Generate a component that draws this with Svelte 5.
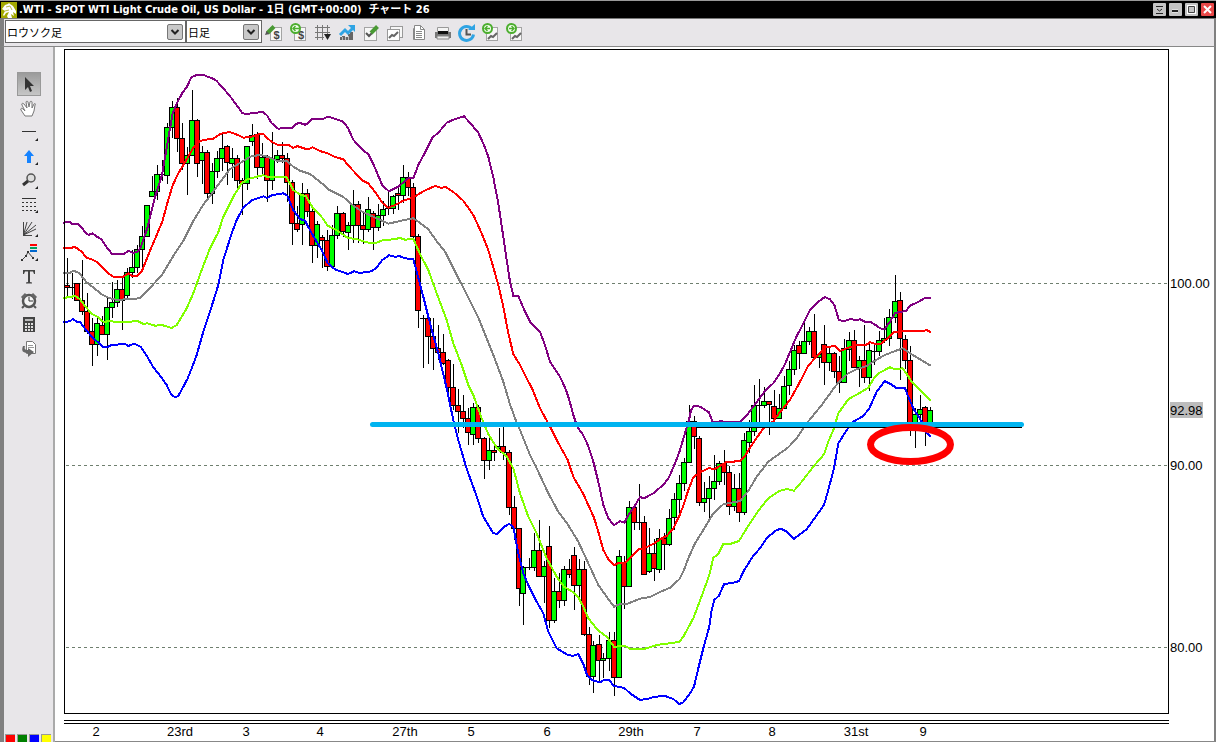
<script>
  const green = '#00ff00';
  const red = '#ff0000';

  // Candle runs: origin of the run, then "x high bodyTop bodyBottom low colour" in thirds of a chart unit.
  const runs = [
    [60, 60, `22 595 677 682 712 r;37 640 682 685 717 k;52 670 670 722 722 r;67 600 721 754 765 r;82 700 754 814 822 r;97 775 814 853 920 r;112 775 790 853 890 g;127 770 797 823 825 r;142 715 742 823 900 g;157 667 727 742 775 g;172 660 688 727 742 g;187 650 688 722 812 r;202 625 637 706 722 g;217 570 622 638 655 g;232 555 568 622 640 g;247 500 529 568 625 g;262 436 436 529 529 g;277 350 394 409 409 g;292 315 343 394 420 g;307 300 343 346 365 k;322 190 202 346 372 g;337 125 142 202 235 g;352 115 142 235 277 r;367 190 235 310 332 r;382 263 286 310 407 g;397 92 181 286 290 g;412 177 181 310 353 r;428 260 278 301 373 g;443 270 277 401 425 r;458 310 334 401 433 g;473 275 295 334 355 g;488 222 265 295 335 g;503 255 259 307 377 r;518 265 295 310 355 g;533 287 295 361 392 r;548 355 361 370 465 r;563 259 259 370 392 g;578 193 226 244 260 g;593 217 223 322 358 r;608 250 292 322 350 g;623 285 292 361 427 r;638 217 295 361 392 g;653 272 286 297 310 g;668 247 286 295 310 r;683 280 295 367 427 r;698 360 367 490 555 r;713 440 490 508 518 r`],
    [280, 100, `68 250 280 373 437 g;83 268 280 334 352 r;98 328 334 437 490 r;113 365 373 437 475 g;128 407 412 421 505 r;143 392 421 499 515 r;158 375 406 499 502 g;173 320 340 406 418 g;189 337 340 394 412 r;204 367 376 398 452 g;219 272 313 376 430 g;234 303 313 376 430 r;249 335 376 388 433 r;264 293 328 388 397 g;279 335 340 382 452 r;294 313 346 382 395 g;309 305 328 346 378 g;324 275 325 328 345 k;339 287 289 325 343 g;354 265 280 286 332 r;369 197 232 286 310 g;384 218 232 262 290 r;399 250 262 409 415 r;414 402 409 631 686 r;430 645 655 657 805 k;445 650 655 709 792 r;460 655 709 745 812 r;475 675 745 757 780 r;490 702 757 790 795 r;505 778 781 862 880 r;520 793 862 916 930 r;535 868 916 934 1000 r;550 885 934 955 985 r;565 925 955 997 1035 r;580 910 922 1003 1037 g;595 915 922 1015 1030 r`],
    [440, 390, `132 142 145 211 267 r;147 145 181 211 240 g;162 160 181 187 215 r;177 115 169 175 180 g;191 110 169 187 212 r;207 180 187 352 377 r;222 320 352 415 452 r;237 415 415 595 650 r;251 530 532 610 707 g;267 505 532 535 540 k;282 430 481 532 545 g;297 390 481 559 562 r;312 515 529 559 640 g;327 410 469 691 715 r;342 565 604 691 700 g;357 550 604 631 655 r;372 528 538 631 650 g;387 508 538 553 565 r;402 472 496 586 662 r;417 508 538 586 622 g;432 515 538 733 740 r;447 712 733 859 887 r;461 755 766 859 910 g;477 735 763 811 880 r;491 790 805 811 865 g;507 727 751 805 845 g;522 727 751 862 920 r;537 482 499 862 865 g;552 500 517 589 658 r;568 333 352 589 590 g;583 350 352 397 420 r;598 283 397 399 420 k;613 380 397 553 555 r;628 415 490 544 550 g;643 448 490 535 575 r;658 418 445 538 550 g;673 430 445 463 540 r;688 358 385 463 470 g;703 310 328 382 422 g`],
    [620, 390, `178 255 280 328 370 g;193 205 217 280 305 g;208 47 95 217 220 g;223 80 95 139 177 r;238 138 145 337 350 r;253 277 325 337 368 g;268 258 295 325 390 g;283 197 274 295 332 g;298 215 220 274 285 g;313 180 220 247 285 r;328 230 247 349 375 r;343 253 295 349 365 g;358 250 295 367 397 r;373 130 151 367 375 g;388 90 124 157 190 g`],
    [740, 265, `43 360 421 499 515 g;59 343 421 423 490 k;74 367 409 421 430 g;89 408 409 418 510 r;104 375 424 460 490 r;119 387 430 460 462 g;134 333 364 430 430 g;149 290 313 361 390 g;164 240 256 313 330 g;179 230 241 265 313 r;194 175 229 265 268 g;209 188 199 229 240 g;224 147 199 277 280 r;239 265 268 277 310 g;254 180 238 292 362 r;269 250 265 292 320 g;284 262 265 319 340 r;299 275 319 352 386 r;314 222 250 352 355 g;329 203 226 253 290 g;344 197 226 307 310 r;359 275 286 307 368 g;374 180 286 337 355 r;389 235 256 337 380 g;404 240 258 260 300 k;419 200 226 259 275 g;434 160 220 226 235 g;449 133 157 220 245 g;466 30 109 157 175 g;481 82 106 220 345 r;496 210 223 286 313 r;511 245 286 480 515 r;526 430 448 480 550 g;541 390 433 448 465 g;556 425 427 480 545 r;571 427 436 480 480 g`]
  ];

  const candles = runs.flatMap(([ox, oy, text]) =>
    text.split(';').map((row) => {
      const p = row.split(' ');
      const y = (v) => oy + Math.floor(Number(v) / 3);
      return { x: ox + Math.floor(Number(p[0]) / 3), high: y(p[1]), top: y(p[2]), bottom: y(p[3]), low: y(p[4]), kind: p[5] };
    })
  );

  // Band lines: each part has its own origin and is stored in thirds of a chart unit.
  const bands = [
    { name: 'upper2', color: '#800080', parts: [
      [60, 60, '10 488,28 485,34 491,52 491,64 501,80 523,88 524,97 520,108 528,125 539,140 562,157 583,178 581,193 581,205 572,217 578,232 577,242 562,262 505,285 412,306 345,325 235,338 160,352 127,367 99,380 82,394 52,410 45,430 44,445 51,457 55,470 63,485 80,500 97,515 115,530 136,547 159,562 163,578 158,610 157,622 167,635 190,655 206,685 203,698 203,710 191'],
      [280, 100, '60 69,75 74,82 72,95 58,115 56,128 58,143 50,158 54,188 64,204 84,220 119,250 152,264 161,280 192,307 256,327 274,355 260,385 235,400 235,415 195,430 167,457 113,475 98,500 68,520 59,552 49,567 65,595 98,612 135,625 170,640 232,655 310,665 378,680 480,690 545,700 587,715 588,735 635,750 665,780 695,795 735,810 785,840 830'],
      [440, 390, '378 0,388 30,400 75,412 110,430 136,445 168,460 215,475 275,490 345,505 385,522 406,540 393,553 398,567 372,583 350,600 321,612 325,640 310,655 297,672 283,688 260,703 225'],
      [620, 390, '178 187,193 137,207 90,213 60,223 47,240 50,267 67,277 94,290 97,300 93,320 97,360 96,385 70,405 43'],
      [740, 265, '77 375,100 355,120 325,134 299,149 263,167 220,190 175,210 135,232 112,255 96,270 103,283 120,297 166,315 168,332 161,345 166,360 163,375 170,390 170,408 181,420 190,434 192,450 170,465 145,480 140,497 139,510 122,530 113,555 99,572 99']
    ] },
    { name: 'upper1', color: '#ff0000', parts: [
      [60, 60, '10 564,35 564,42 560,52 565,67 577,80 594,95 598,110 606,125 619,142 638,160 650,190 650,205 640,215 647,232 648,245 635,262 592,290 525,307 485,322 430,338 376,355 340,382 295,400 263,415 246,430 240,460 236,480 222,507 216,525 221,550 233,580 229,590 224,610 221,622 235,635 245,652 254,685 254,700 264,712 258'],
      [280, 100, '60 141,75 146,88 146,98 142,125 155,143 160,160 169,190 178,204 196,234 227,250 243,265 250,290 283,308 310,325 323,345 315,370 302,400 292,430 274,465 258,482 263,498 262,520 276,550 302,580 345,605 400,625 450,640 502,655 555,670 620,685 700,700 762,720 795'],
      [440, 390, '278 0,300 55,325 100,350 150,383 210,400 260,430 312,445 345,462 383,475 425,490 480,505 507,522 526,537 518,555 518,575 500,597 477,615 474,640 462,660 448,680 438,700 415'],
      [620, 390, '178 378,190 347,205 300,220 262,240 247,268 234,283 238,300 228,318 217,360 213,373 200,400 158,430 115,462 93'],
      [740, 265, '105 460,150 405,180 350,205 302,235 268,260 245,285 244,300 258,325 248,350 241,378 240,390 232,405 236,420 238,440 222,460 202,483 199,500 198,550 198,560 195,572 202']
    ] },
    { name: 'middle', color: '#808080', parts: [
      [60, 60, '10 638,30 638,40 632,58 639,78 665,97 680,125 703,145 713,170 720,240 715,262 692,292 660,307 643,345 580,370 543,400 483,430 434,447 412,480 367,510 327,550 303,575 288,605 285,630 293,650 302,680 302,700 320'],
      [280, 100, '60 212,90 222,128 252,143 267,190 291,220 317,250 337,280 350,325 371,360 363,400 355,430 376,445 388,470 424,495 455,520 505,550 563,595 652,620 715,640 765,670 845,690 913,705 955'],
      [440, 390, '240 120,270 195,290 235,325 310,355 365,383 403,415 455,445 520,475 585,505 627,522 650,540 642,560 642,600 626,630 621,660 606,690 593'],
      [620, 390, '178 568,190 545,205 505,225 460,250 420,280 370,310 343,360 333,385 303,410 260,445 215,480 190,505 172,530 145,560 100,605 45'],
      [740, 265, '285 365,300 348,325 325,350 313,380 303,400 290,430 272,460 260,488 250,515 268,545 286,572 302']
    ] },
    { name: 'lower1', color: '#80ff00', parts: [
      [60, 60, '10 713,30 712,45 707,60 718,78 742,97 763,112 770,130 785,150 784,190 787,232 783,250 792,262 790,285 797,305 795,335 804,350 795,365 770,380 745,400 700,425 630,450 565,475 517,490 470,520 410,545 370,562 358,590 350,610 346,625 352,670 350,680 352,700 390'],
      [280, 100, '60 283,78 289,98 323,113 338,128 355,143 377,170 391,204 414,230 417,260 427,285 430,308 421,350 417,358 413,375 419,400 417,420 462,445 510,470 580,500 660,520 730,545 795,565 855,580 885,605 955,625 1002,650 1043,680 1070'],
      [440, 390, '220 235,240 310,265 380,290 430,320 505,350 560,372 590,400 607,415 622,430 650,445 685,475 722,500 740,522 770,555 768,570 776,615 776,655 764,690 760'],
      [620, 390, '178 755,190 740,220 685,250 605,268 555,280 503,295 492,310 462,330 462,357 453,380 415,415 362,445 325,480 302,500 297,522 302,545 275,580 230,612 193,625 155'],
      [740, 265, '282 490,295 445,325 403,360 383,385 368,400 343,415 325,440 312,450 307,465 313,488 310,500 327,515 350,545 380,572 408']
    ] },
    { name: 'lower2', color: '#0000ff', parts: [
      [60, 60, '10 786,30 784,38 777,50 785,60 786,78 810,97 832,112 845,130 862,145 860,155 855,195 852,205 858,222 851,242 860,262 890,280 922,305 953,320 975,333 1003,345 1012,355 1008,370 980,382 958,395 925,410 885,430 815,450 755,475 675,490 600,515 520,530 480,550 443,575 421,610 409,622 414,635 406,670 400,682 407,700 450'],
      [280, 100, '60 357,75 362,95 400,125 450,143 490,165 508,204 522,222 514,240 519,275 514,290 502,307 480,327 466,345 470,360 469,375 475,400 478,410 515,430 590,450 670,475 760,500 865,520 960,535 1020'],
      [440, 390, '78 230,85 250,105 305,130 380,160 430,172 431,190 412,207 402,220 410,235 490,250 550,265 585,290 635,310 670,325 725,350 775,385 796,400 797,415 792,430 822,442 857,455 870,480 877,492 870,507 870,522 888,553 894,570 910,600 930,625 926,645 920,675 918,700 927'],
      [620, 390, '178 942,190 937,210 910,222 890,235 835,250 775,268 710,275 660,283 630,297 617,312 583,350 576,358 572,370 545,400 497,420 475,440 445,465 423,482 416,500 425,522 446,560 418,580 390,612 345,625 300,642 235,655 160,685 113'],
      [740, 265, '340 470,370 453,388 430,410 380,434 348,452 357,470 370,495 370,505 395,520 430,545 470,560 505,572 514']
    ] }
  ].map((band) => ({
    ...band,
    points: band.parts
      .flatMap(([ox, oy, text]) => text.split(',').map((pt) => {
        const [x, y] = pt.split(' ').map(Number);
        return `${(ox + x / 3).toFixed(1)},${(oy + y / 3).toFixed(1)}`;
      }))
      .join(' ')
  }));

  const prices = [['100.00', 283], ['90.00', 465], ['80.00', 647]];
  const dates = [['2', 96], ['23rd', 180], ['3', 246], ['4', 320], ['27th', 405], ['5', 471], ['6', 547], ['29th', 631], ['7', 697], ['8', 772], ['31st', 856], ['9', 923]];
  const swatches = [['赤', '#ff0000'], ['緑', '#008000'], ['青', '#0000ff'], ['黄', '#ffff00']];
  const toolNames = ['trade', 'order', 'grid', 'indicator', 'edit', 'charts', 'copy', 'print', 'refresh', 'back', 'forward'];
  const drawNames = ['pointer', 'hand', 'line', 'arrow', 'zoom', 'levels', 'fan', 'pattern', 'text', 'alarm', 'calc', 'export'];
  let tool = $state('pointer');
</script>

{#snippet sheet(x, y)}
  <rect {x} {y} width="11" height="13" fill="#f7f7f7" stroke="#a4a4a4" />
{/snippet}

{#snippet trend(x, y)}
  <path d="M{x} {y}l3-3 2 1 4-4" fill="none" stroke="#666" stroke-width="2" />
{/snippet}

{#snippet badge(arrow)}
  <circle cx="9.5" cy="7.5" r="4.5" fill="#f4fff0" stroke="#4cae2f" stroke-width="2" />
  <path d={arrow} fill="none" stroke="#4cae2f" stroke-width="1.4" />
{/snippet}

{#snippet toolIcon(name)}
  <svg viewBox="0 0 24 24" aria-hidden="true">
    {#if name === 'trade'}
      {@render sheet(8.5, 6.5)}
      <text x="14.5" y="18" class="dollar">$</text>
      <path d="M5.5 12L12 5.500" stroke="#4a9a35" stroke-width="4" /><path d="M3 14l1.500-4 3 3z" fill="#555" />
    {:else if name === 'order'}
      {@render sheet(8.5, 6.5)}
      <text x="15" y="18" class="dollar">$</text>
      {@render badge('M7 7.500h7M9.500 5L7 7.500 9.500 10')}
    {:else if name === 'grid'}
      <path d="M7.500 4v15M12.500 4v15M17.500 4v10M5 6.500h15M5 11.500h15M5 16.500h9" stroke="#777" fill="none" /><path d="M14 13h7l-3.500 6z" fill="#222" />
    {:else if name === 'indicator'}
      <path d="M6 19v-3h2v-1h3v1h3v-3h2v-2h3v8z" fill="#666" /><path d="M8.500 19v-3M11.500 19v-3M14.500 19v-4" stroke="#bbb" /><path d="M6 14l5-5 3 3 5-5" fill="none" stroke="#2fa4e4" stroke-width="3" /><path d="M14 4h7v7z" fill="#2fa4e4" />
    {:else if name === 'edit'}
      <rect x="6.500" y="6.500" width="12" height="13" fill="#f7f7f7" stroke="#a4a4a4" /><path d="M8 12l3 3 3-3" fill="none" stroke="#555" stroke-width="2" /><path d="M13 12l6.500-6.500" stroke="#4a9a35" stroke-width="4" />
    {:else if name === 'charts'}
      <rect x="8.500" y="5.500" width="12" height="11" fill="#f7f7f7" stroke="#999" /><rect x="5.500" y="8.500" width="12" height="11" fill="#fff" stroke="#999" />{@render trend(7, 17)}
    {:else if name === 'copy'}
      <path d="M7.500 7.500h8v11h-8z" fill="#fff" stroke="#888" /><path d="M8.500 4.500h6l4 4v10h-10z" fill="#fff" stroke="#888" /><path d="M14.500 4.500v4h4M10 10.500h6M10 12.500h6M10 14.500h6M10 16.500h6" fill="none" stroke="#888" />
    {:else if name === 'print'}
      <path d="M7.500 6.500h11v4h-11z" fill="#f4f4f4" stroke="#999" /><path d="M5 11h16v6H5z" fill="#777" /><path d="M8 10h10v3H8z" fill="#111" /><path d="M7 15h12v3H7z" fill="#eee" stroke="#888" />
    {:else if name === 'refresh'}
      <path d="M18 8a7 7 0 1 0 1.500 5.500" fill="none" stroke="#2fa4e4" stroke-width="3" /><path d="M14 9h7V3z" fill="#2fa4e4" /><path d="M12.500 8v5.500H17" fill="none" stroke="#555" stroke-width="2" />
    {:else if name === 'back'}
      {@render sheet(8.5, 6.5)}{@render trend(10, 18)}
      {@render badge('M7 7.500h5M9.500 5L7 7.500 9.500 10')}
    {:else}
      {@render sheet(8.5, 6.5)}{@render trend(10, 18)}
      {@render badge('M7 7.500h5M9.500 5L12 7.500 9.500 10')}
    {/if}
  </svg>
{/snippet}

{#snippet drawIcon(name)}
  <svg viewBox="0 -1 24 24" aria-hidden="true">
    {#if name === 'pointer'}
      <path d="M8 4v13l3-3 2 5 2-1-2-5h4z" fill="#333" />
    {:else if name === 'hand'}
      <path d="M8 19l-4-6c-1-2 1-2 2-1l2 2-3-6c-1-2 1-2 2-1l3 4-1-6c0-1 2-1 2 0l1 5 1-5c0-1 2-1 2 0v6l2-4c1-1 2 0 1 1l-1 6-2 5z" fill="#fff" stroke="#777" />
    {:else if name === 'line'}
      <path d="M5 10.500h14" stroke="#333" />
    {:else if name === 'arrow'}
      <path d="M12 5l5 6h-3v7h-4v-7H7z" fill="#1683ff" />
    {:else if name === 'zoom'}
      <circle cx="14" cy="9" r="4" fill="#ddd" stroke="#555" stroke-width="1.500" /><path d="M11 12l-5 4" stroke="#333" stroke-width="3" />
    {:else if name === 'levels'}
      <path d="M5 5.500h14" stroke="#333" /><path d="M5 9.500h14M5 13.500h14M5 17.500h14" stroke="#333" stroke-dasharray="2 2" />
    {:else if name === 'fan'}
      <path d="M6.500 5v13M6.500 18L10 5M6.500 18L15 5M6.500 18L19 8M6.500 18L19 12M6 18.500h9" fill="none" stroke="#444" />
    {:else if name === 'pattern'}
      <path d="M13 4h7" stroke="#f00" stroke-width="2" /><path d="M13 7h7" stroke="#00a060" stroke-width="2" /><path d="M13 10h7" stroke="#06c" stroke-width="2" /><path d="M5 19l4-4 2-4 5 6" fill="none" stroke="#444" /><path d="M4 18h2v2H4zM8 14h2v2H8zM10 10h2v2h-2zM15 16h2v2h-2z" fill="#333" />
    {:else if name === 'text'}
      <path d="M6 5h12v4h-1l-1-2.500h-3V17l2 .5v1H9v-1l2-.5V6.500H8L7 9H6z" fill="#444" />
    {:else if name === 'alarm'}
      <circle cx="12" cy="12" r="6" fill="#f5f5f5" stroke="#555" stroke-width="2.500" /><path d="M12 8v4h4" fill="none" stroke="#333" /><path d="M5 9l4-4M19 9l-4-4" stroke="#666" stroke-width="3" /><path d="M7 17l-2 2M17 17l2 2" stroke="#555" stroke-width="2" />
    {:else if name === 'calc'}
      <rect x="6" y="4" width="12" height="15" fill="#444" /><path d="M8 6h8v2H8z" fill="#bbb" /><path d="M8 11h8M8 14h8M8 17h8" stroke="#ddd" stroke-width="2" stroke-dasharray="2 1" />
    {:else}
      <path d="M9.500 4.500h6l3 3v9h-9z" fill="#fff" stroke="#777" /><path d="M11 8.500h5M11 10.500h6" stroke="#999" /><path d="M6 9c-2 5 0 7 5 7v4l6-5-6-4v2c-3 0-4-1-3-4z" fill="#666" />
    {/if}
    {#if ['line', 'arrow', 'zoom', 'levels', 'fan', 'pattern'].includes(name)}
      <path d="M21 17v3h-3z" fill="#222" />
    {/if}
  </svg>
{/snippet}

{#snippet chevron()}
  <svg viewBox="0 0 16 16" aria-hidden="true"><rect x=".5" y=".5" width="15" height="15" rx="1.500" fill="#c8c8c8" stroke="#777" /><path d="M4.500 6L8 9.500 11.500 6" fill="none" stroke="#222" stroke-width="2" /></svg>
{/snippet}

<div class="window">
  <header class="title">
    <svg class="logo" viewBox="0 0 16 16" aria-hidden="true"><rect width="16" height="16" fill="#a3a800" /><path d="M1 7l3-4 3-1 1-1 1 1 3 2 3 5v3l-3-2 1 4-3-2 1 4H7l-1-2 2-4-3 1-2 3-1-1 2-4z" fill="#fff" /><path d="M5 5l4-1 2 4M4 9l4-1" fill="none" stroke="#b5b94a" /></svg>
    <h1>.WTI - SPOT WTI Light Crude Oil, US Dollar - 1日 (GMT+00:00)&nbsp; チャート 26</h1>
    <div class="controls">
      <button aria-label="折りたたむ"><svg viewBox="0 0 13 13"><path d="M3 3.500h7M4 6l2.500 2L9 6M3 10.500h7" fill="none" stroke="#222" /></svg></button>
      <button aria-label="最小化"><svg viewBox="0 0 13 13"><path d="M3 8h6" stroke="#fff" stroke-width="3" /><path d="M3 8h6" stroke="#222" stroke-width="2" /></svg></button>
      <button aria-label="最大化"><svg viewBox="0 0 13 13"><path d="M3 3h7v7H3z" fill="none" stroke="#fff" stroke-width="2" /><path d="M3.500 3.500h6v6h-6z" fill="none" stroke="#444" /></svg></button>
      <button class="close" aria-label="閉じる"><svg viewBox="0 0 13 13"><path d="M3 3l7 7M10 3l-7 7" stroke="#fff" stroke-width="2" /></svg></button>
    </div>
  </header>

  <div class="toolbar">
    <span class="combo wide"><select aria-label="チャートの種類"><option>ロウソク足</option></select>{@render chevron()}</span>
    <span class="combo"><select aria-label="期間"><option>日足</option></select>{@render chevron()}</span>
    <div class="tools">
      {#each toolNames as name}
        <button aria-label={name}>{@render toolIcon(name)}</button>
      {/each}
    </div>
  </div>

  <div class="body">
    <aside>
      <div class="draw">
        {#each drawNames as name}
          <button class:active={tool === name} aria-label={name} onclick={() => (tool = name)}>{@render drawIcon(name)}</button>
        {/each}
      </div>
      <div class="swatches">
        {#each swatches as [label, color]}
          <button aria-label={label} style:background={color}></button>
        {/each}
      </div>
    </aside>

    <main>
      <svg class="chart" viewBox="55 47 1159 694" role="img" aria-label=".WTI 日足">
        <g class="crisp">
          {#each prices as [, y]}
            <path d="M66 {y + 0.5}H1168" stroke="#6f7f6f" stroke-dasharray="3 3" />
          {/each}
          {#each candles as c}
            <rect x={c.x} y={c.high} width="1" height={Math.max(1, c.low - c.high)} />
            {#if c.kind === 'k'}
              <rect x={c.x - 3} y={c.top} width="6" height="1" />
            {:else}
              <rect x={c.x - 2.5} y={c.top + 0.5} width="5" height={Math.max(1, c.bottom - c.top)} fill={c.kind === 'g' ? green : red} stroke="#000" />
            {/if}
          {/each}
          {#each bands as band (band.name)}
            <polyline points={band.points} fill="none" stroke={band.color} stroke-width="2" />
          {/each}
          <path d="M64.500 713.500V49.500H1168.500V713.500ZM64 720.500H1169M64 723.500H1169M697 427.500H1022" fill="none" stroke="#000" />
        </g>
        <path d="M372.500 424.500H1021.500" stroke="#00b4f0" stroke-width="5" stroke-linecap="round" />
        <ellipse cx="910.500" cy="444.500" rx="40" ry="17" fill="none" stroke="#ff0000" stroke-width="7" />
        <rect x="1170" y="402" width="33" height="16" fill="#bcbcbc" />
        {#each [...prices, ['92.98', 410]] as [label, y]}
          <text x="1170" y={y + 5}>{label}</text>
        {/each}
        {#each dates as [label, x]}
          <text {x} y="736" text-anchor="middle">{label}</text>
        {/each}
      </svg>
    </main>
  </div>
</div>

<style>
  :global(body) { margin: 0; }
  .window {
    min-height: 100vh;
    display: flex;
    flex-direction: column;
    background: #e8e6e9;
    font-family: "Liberation Sans", "Noto Sans CJK JP", sans-serif;
  }
  button { padding: 0; border: 0; background: none; display: block; }
  button svg { display: block; width: 100%; height: 100%; }
  .title {
    box-sizing: border-box;
    height: 19px;
    display: flex;
    align-items: center;
    gap: 2px;
    padding: 0 2px 0 1px;
    background: #000;
    border-top: 1px solid #999;
    border-bottom: 1px solid #777;
  }
  .logo { width: 16px; height: 16px; flex: none; }
  h1 {
    flex: 1;
    min-width: 0;
    margin: 0;
    overflow: hidden;
    white-space: nowrap;
    color: #fff;
    font: bold 11px/16px "DejaVu Sans Condensed", "Noto Sans CJK JP", sans-serif;
  }
  .controls { display: flex; gap: 3px; }
  .controls button { width: 13px; height: 13px; background: #c4c4c4; border-radius: 1px; }
  .controls .close { background: #e84848; }
  .toolbar {
    box-sizing: border-box;
    height: 28px;
    display: flex;
    align-items: flex-start;
    padding: 1px 0 0 1px;
    border-left: 4px solid #808080;
    border-right: 2px solid #808080;
    border-bottom: 1px solid #888;
  }
  .combo {
    box-sizing: border-box;
    display: flex;
    align-items: center;
    width: 76px;
    height: 23px;
    padding-right: 2px;
    background: #fff;
    border: 1px solid #666;
  }
  .combo.wide { width: 181px; }
  .combo svg { width: 16px; height: 16px; flex: none; }
  select {
    appearance: none;
    flex: 1;
    min-width: 0;
    padding: 0 0 0 1px;
    border: 0;
    background: none;
    color: #000;
    font: 11px/18px "Noto Sans CJK JP", sans-serif;
  }
  .tools { display: flex; padding-top: 1px; }
  .tools button { width: 24px; height: 24px; }
  .dollar { font: bold 11px "Liberation Sans", sans-serif; text-anchor: middle; fill: #444; }
  .body { flex: 1; display: flex; }
  aside {
    box-sizing: border-box;
    flex: none;
    width: 55px;
    display: flex;
    flex-direction: column;
    justify-content: space-between;
    border-left: 4px solid #808080;
    border-right: 2px solid #aaa;
  }
  .draw { display: flex; flex-direction: column; padding: 25px 0 0 13px; }
  .draw button { width: 24px; height: 24px; }
  .draw .active { background: linear-gradient(#999, #c8c8c8); outline: 1px solid #999; outline-offset: -1px; }
  .swatches { display: flex; gap: 2px; padding-left: 1px; }
  .swatches button { box-sizing: border-box; width: 10px; height: 8px; border: 1px solid #999; border-width: 1px 0 0 1px; }
  main { flex: 1; min-width: 0; background: #fff; border-right: 2px solid #808080; border-bottom: 1px solid #888; }
  .chart { display: block; width: 100%; height: auto; }
  .crisp { shape-rendering: crispEdges; }
  text { font: 13px "Liberation Sans", sans-serif; fill: #000; }
</style>
